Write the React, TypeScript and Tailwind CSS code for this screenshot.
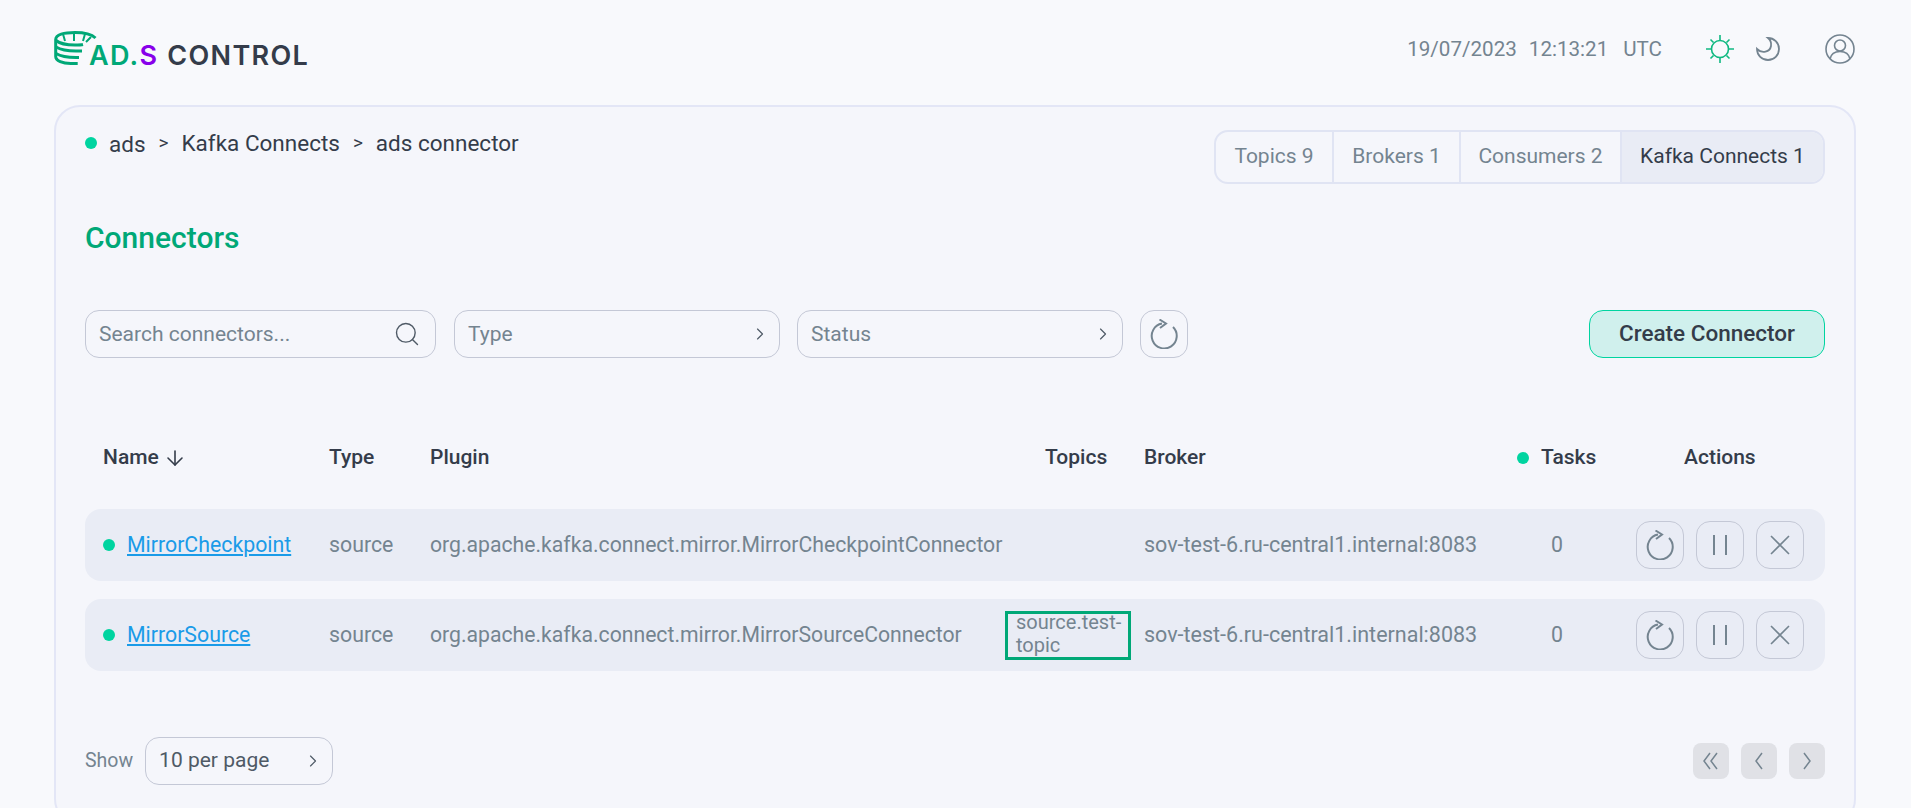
import { ChevronRight, Search, ArrowDown } from "lucide-react";

const rowGrid = "grid grid-cols-[244px_101px_575px_139px_373px_119px_189px] items-center";

const connectors = [
  { name: "MirrorCheckpoint", plugin: "org.apache.kafka.connect.mirror.MirrorCheckpointConnector", topics: "" },
  { name: "MirrorSource", plugin: "org.apache.kafka.connect.mirror.MirrorSourceConnector", topics: "source.test-topic" },
];

function Logo() {
  return (
    <div className="flex items-end font-['Inter',sans-serif] text-[27px] leading-[25px] font-semibold">
      <svg width="43" height="34" viewBox="0 0 43 34" fill="none" stroke="#00a877" strokeWidth="3" className="mb-[3px]">
        <path d="M41.500 7C37 2.800 29 1.500 21 1.500 10 1.500 1.700 3.500 1.700 8.500v17c0 4.500 7 7 15 7h7" />
        <path d="M2 9.500c4 3.300 11 4.500 19 4.500 3 0 6 0 8-.5" />
        <path d="M2 16c5 3 12 4 20 4h6" />
        <path d="M2 22.500c5 3 12 4 20 4h3" />
        <path d="M9 3l2 7M20 2v8M31 3l-2 7M37 6l-5 5" strokeWidth="2" />
      </svg>
      <span className="ml-[-8px] tracking-[1.300px] text-[#00a877]">AD.</span>
      <span className="tracking-[1.300px] text-[#8800ea]">S</span>
      <span className="ml-[9px] tracking-[1.300px] text-[#343c4a]">CONTROL</span>
    </div>
  );
}

function SunIcon() {
  return (
    <svg width="28" height="28" viewBox="0 0 28 28" fill="none" stroke="#10b981" strokeWidth="1.600">
      <circle cx="14" cy="14" r="8.500" />
      <path d="M14 0v5M14 23v5M0 14h5M23 14h5M4.500 4.500l3 3M20.500 20.500l3 3M23.500 4.500l-3 3M7.500 20.500l-3 3" />
    </svg>
  );
}

function MoonIcon() {
  return (
    <svg width="24" height="24" viewBox="0 0 24 24" fill="none" stroke="#748490" strokeWidth="1.800">
      <path d="M12 1A11 11 0 1 1 1 12C6 17 14 15 15 9 15.500 6 14.500 3 12 1z" />
    </svg>
  );
}

function UserIcon() {
  return (
    <svg width="30" height="30" viewBox="0 0 30 30" fill="none" stroke="#748490" strokeWidth="1.600">
      <circle cx="15" cy="15" r="14" />
      <circle cx="15" cy="11.500" r="5.500" />
      <path d="M5 25c1-5 5-7.500 10-7.500s9 2.500 10 7.500" />
    </svg>
  );
}

function RestartIcon() {
  return (
    <svg width="28" height="30" viewBox="0 0 28 30" fill="none" stroke="#748490" strokeWidth="2">
      <path d="M23 8A12.500 12.500 0 1 1 12 4.600" />
      <path d="M9.500.500L16 4.500 10 9" />
    </svg>
  );
}

function SelectBox({ label, className }: { label: string; className: string }) {
  return (
    <div className={`flex h-[48px] items-center justify-between rounded-[14px] border border-[#c4c8d6] pr-[9px] pl-[13px] ${className}`}>
      <span className="pt-[1px] text-[21px] text-[#748490]">{label}</span>
      <ChevronRight size={20} color="#4f5a66" strokeWidth={1.4} />
    </div>
  );
}

function ActionButton({ children }: { children: React.ReactNode }) {
  return (
    <button className="flex h-[48px] w-[48px] items-center justify-center rounded-[14px] border border-[#c4c8d6]">
      {children}
    </button>
  );
}

function PageButton({ children }: { children: React.ReactNode }) {
  return <button className="flex h-[36px] w-[36px] items-center justify-center rounded-[8px] bg-[#e0e1e6]">{children}</button>;
}

function Dot() {
  return <span className="block h-[12px] w-[12px] rounded-full bg-[#00d4a0]" />;
}

export default function App() {
  const tabs = [
    { label: "Topics 9", width: "w-[118px]" },
    { label: "Brokers 1", width: "w-[127px]" },
    { label: "Consumers 2", width: "w-[161px]" },
  ];

  return (
    <div className="h-[808px] w-[1911px] overflow-hidden bg-[#f8f9fc] pl-[54px] font-['Roboto',sans-serif] text-[#343c4a]">
      <header className="mb-[7px] flex h-[98px] w-[1802px] items-center justify-between">
        <Logo />
        <div className="flex items-center">
          <div className="flex pt-[1px] text-[20.600px] text-[#748490]">
            <span>19/07/2023</span>
            <span className="ml-[12px]">12:13:21</span>
            <span className="ml-[15px]">UTC</span>
          </div>
          <div className="mr-[1px] ml-[44px] flex items-center">
            <SunIcon />
            <div className="ml-[22px]">
              <MoonIcon />
            </div>
            <div className="ml-[45px]">
              <UserIcon />
            </div>
          </div>
        </div>
      </header>

      <main className="h-[720px] w-[1802px] rounded-[26px] border-2 border-[#e3e6f6] bg-[#f5f6fb] px-[29px] pt-[23px]">
        <div className="flex items-start justify-between">
          <div className="-mt-[1px] flex items-center text-[22.500px] leading-[28px]">
            <Dot />
            <span className="ml-[12px] translate-y-[1px]">ads</span>
            <span className="ml-[13px] text-[19px]">&gt;</span>
            <span className="ml-[13px]">Kafka Connects</span>
            <span className="ml-[13px] text-[19px]">&gt;</span>
            <span className="ml-[13px]">ads connector</span>
          </div>
          <div className="flex h-[54px] overflow-hidden rounded-[14px] border-2 border-[#e0e4f3] text-[21px]">
            {tabs.map((tab) => (
              <div key={tab.label} className={`flex items-center justify-center border-r-2 border-[#e0e4f3] text-[#748490] ${tab.width}`}>
                {tab.label}
              </div>
            ))}
            <div className="flex w-[201px] items-center justify-center bg-[#e9ecf5]">Kafka Connects 1</div>
          </div>
        </div>

        <h1 className="mt-[37px] text-[30px] leading-[34px] font-medium text-[#00a877]">Connectors</h1>

        <div className="mt-[55px] flex items-center">
          <div className="flex h-[48px] w-[351px] items-center justify-between rounded-[14px] border border-[#c4c8d6] pr-[14px] pl-[13px]">
            <span className="pt-[1px] text-[21px] text-[#748490]">Search connectors...</span>
            <Search size={28} color="#4f5a66" strokeWidth={1.2} />
          </div>
          <SelectBox label="Type" className="ml-[18px] w-[326px]" />
          <SelectBox label="Status" className="ml-[17px] w-[326px]" />
          <div className="ml-[17px]">
            <ActionButton>
              <RestartIcon />
            </ActionButton>
          </div>
          <button className="ml-auto h-[48px] w-[236px] rounded-[14px] border border-[#00d4a0] bg-[#d0f0ed] text-[22.500px] font-medium">
            Create Connector
          </button>
        </div>

        <div className={`mt-[80px] h-[40px] text-[21px] font-medium ${rowGrid}`}>
          <div className="flex items-center pl-[18px]">
            Name
            <ArrowDown size={24} strokeWidth={1.6} className="ml-[4px]" />
          </div>
          <div>Type</div>
          <div>Plugin</div>
          <div className="pl-[40px]">Topics</div>
          <div>Broker</div>
          <div className="flex items-center">
            <Dot />
            <span className="ml-[12px]">Tasks</span>
          </div>
          <div className="pl-[48px]">Actions</div>
        </div>

        <div className="mt-[31px] flex flex-col gap-[18px]">
          {connectors.map((c) => (
            <div key={c.name} className={`h-[72px] rounded-[16px] bg-[#e9ecf5] text-[21.300px] text-[#748490] ${rowGrid}`}>
              <div className="flex items-center pl-[18px]">
                <Dot />
                <a className="ml-[12px] text-[#1a9be8] underline">{c.name}</a>
              </div>
              <div>source</div>
              <div className="text-[21.200px]">{c.plugin}</div>
              <div>
                {c.topics && (
                  <div className="h-[49px] w-[126px] border-[3px] border-[#00a877] pl-[8px] text-[20px] leading-[23px]">
                    <div className="-mt-[3px]">
                      source.test-
                      <br />
                      topic
                    </div>
                  </div>
                )}
              </div>
              <div className="text-[21.500px]">sov-test-6.ru-central1.internal:8083</div>
              <div className="pl-[34px]">0</div>
              <div className="flex gap-[12px]">
                <ActionButton>
                  <RestartIcon />
                </ActionButton>
                <ActionButton>
                  <svg width="18" height="22" viewBox="0 0 18 22" fill="none" stroke="#748490" strokeWidth="2">
                    <path d="M3 1v20M15 1v20" />
                  </svg>
                </ActionButton>
                <ActionButton>
                  <svg width="22" height="22" viewBox="0 0 22 22" fill="none" stroke="#748490" strokeWidth="1.600">
                    <path d="M2 2l18 18M20 2L2 20" />
                  </svg>
                </ActionButton>
              </div>
            </div>
          ))}
        </div>

        <div className="mt-[66px] flex h-[48px] items-center justify-between">
          <div className="flex items-center">
            <span className="text-[19.500px] text-[#748490]">Show</span>
            <div className="ml-[12px] flex h-[48px] w-[188px] items-center justify-between rounded-[14px] border border-[#c4c8d6] pr-[9px] pl-[13px]">
              <span className="text-[21px] text-[#4f5a66]">10 per page</span>
              <ChevronRight size={20} color="#4f5a66" strokeWidth={1.4} />
            </div>
          </div>
          <div className="flex gap-[12px]">
            <PageButton>
              <svg width="20" height="18" viewBox="0 0 20 18" fill="none" stroke="#748490" strokeWidth="1.500">
                <path d="M9 1L3 9l6 8M16 1l-6 8 6 8" />
              </svg>
            </PageButton>
            <PageButton>
              <svg width="10" height="18" viewBox="0 0 10 18" fill="none" stroke="#748490" strokeWidth="1.500">
                <path d="M8 1L2 9l6 8" />
              </svg>
            </PageButton>
            <PageButton>
              <svg width="10" height="18" viewBox="0 0 10 18" fill="none" stroke="#748490" strokeWidth="1.500">
                <path d="M2 1l6 8-6 8" />
              </svg>
            </PageButton>
          </div>
        </div>
      </main>
    </div>
  );
}
